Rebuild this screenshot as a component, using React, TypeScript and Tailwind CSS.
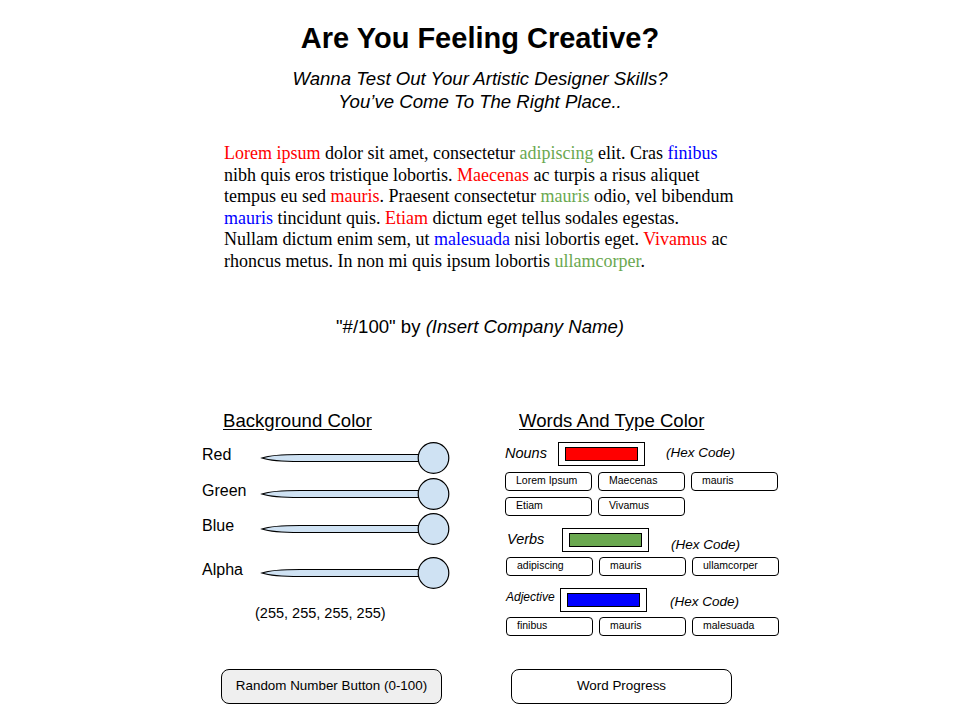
import React from "react";

const sans = "font-['Liberation_Sans',Arial,sans-serif]";

function Slider() {
  return (
    <svg width="192" height="34" viewBox="0 0 192 34" className="block">
      <path
        d="M2 17 C 10 14.2, 20 13.5, 40 13.5 L 162 13.5 L 162 20.5 L 40 20.5 C 20 20.5, 10 19.8, 2 17 Z"
        fill="#cfe2f3"
        stroke="#000"
        strokeWidth="1.2"
      />
      <circle cx="173.5" cy="17" r="15.3" fill="#cfe2f3" stroke="#000" strokeWidth="1.2" />
    </svg>
  );
}

function SliderRow({ label, mt }: { label: string; mt: string }) {
  return (
    <div className={`flex items-center ${mt}`}>
      <span className="w-[58px] pb-[6px] text-[16px]">{label}</span>
      <Slider />
    </div>
  );
}

function Swatch({ color }: { color: string }) {
  return (
    <div className="flex h-[24px] w-[87px] items-center justify-center border border-black">
      <div className="h-[14px] w-[73px] border border-black" style={{ background: color }} />
    </div>
  );
}

function Pill({ text }: { text: string }) {
  return (
    <div className="flex h-[19px] w-[87px] items-center rounded-[4px] border border-black pl-[10px] text-[10.5px]">
      {text}
    </div>
  );
}

function WordGroup({
  label,
  labelClass,
  color,
  hexClass,
  pillGap,
  words,
}: {
  label: string;
  labelClass: string;
  color: string;
  hexClass: string;
  pillGap: string;
  words: string[][];
}) {
  return (
    <div>
      <div className="flex h-[24px] items-start">
        <span className={`italic ${labelClass}`}>{label}</span>
        <Swatch color={color} />
        <span className={`italic text-[13.5px] ${hexClass}`}>(Hex Code)</span>
      </div>
      <div className={`flex flex-col gap-[6px] ${pillGap}`}>
        {words.map((row, i) => (
          <div key={i} className="flex gap-[6px]">
            {row.map((w) => (
              <Pill key={w} text={w} />
            ))}
          </div>
        ))}
      </div>
    </div>
  );
}

export default function App() {
  const red = "text-[#ff0000]";
  const green = "text-[#6aa84f]";
  const blue = "text-[#0000ff]";

  return (
    <div className={`h-[720px] w-[960px] overflow-hidden bg-white text-black ${sans}`}>
      <div className="pt-[21px] text-center">
        <h1 className="text-[29px] font-bold leading-[34px]">Are You Feeling Creative?</h1>
        <p className="mt-[12px] text-[18.6px] italic leading-[23px]">
          Wanna Test Out Your Artistic Designer Skills?
          <br />
          You’ve Come To The Right Place..
        </p>
      </div>

      <p className="mx-auto mt-[30px] w-[512px] font-['Liberation_Serif','Times_New_Roman',serif] text-[18px] leading-[21.6px]">
        <span className={red}>Lorem ipsum</span> dolor sit amet, consectetur{" "}
        <span className={green}>adipiscing</span> elit. Cras <span className={blue}>finibus</span>
        <br />
        nibh quis eros tristique lobortis. <span className={red}>Maecenas</span> ac turpis a risus aliquet
        <br />
        tempus eu sed <span className={red}>mauris</span>. Praesent consectetur{" "}
        <span className={green}>mauris</span> odio, vel bibendum
        <br />
        <span className={blue}>mauris</span> tincidunt quis. <span className={red}>Etiam</span> dictum eget
        tellus sodales egestas.
        <br />
        Nullam dictum enim sem, ut <span className={blue}>malesuada</span> nisi lobortis eget.{" "}
        <span className={red}>Vivamus</span> ac
        <br />
        rhoncus metus. In non mi quis ipsum lobortis <span className={green}>ullamcorper</span>.
      </p>

      <p className="mt-[41px] text-center text-[18.6px] leading-[26px]">
        "#/100" by <span className="italic">(Insert Company Name)</span>
      </p>

      <div className="mt-[70px] flex">
        <div className="ml-[202px] w-[300px]">
          <h2 className="ml-[21px] text-[18.6px] leading-[22px] underline underline-offset-[2px]">
            Background Color
          </h2>
          <div className="mt-[9px]">
            <SliderRow label="Red" mt="" />
            <SliderRow label="Green" mt="mt-[2px]" />
            <SliderRow label="Blue" mt="mt-[1px]" />
            <SliderRow label="Alpha" mt="mt-[10px]" />
          </div>
          <p className="mt-[13px] ml-[53px] text-[14.5px]">(255, 255, 255, 255)</p>
        </div>

        <div className="ml-[2px] w-[280px]">
          <h2 className="ml-[15px] text-[18.6px] leading-[22px] underline underline-offset-[2px]">
            Words And Type Color
          </h2>
          <div className="mt-[10px] ml-[1px]">
            <WordGroup
              label="Nouns"
              labelClass="w-[53px] pt-[1px] text-[14.5px]"
              color="#ff0000"
              hexClass="ml-[21px] pt-[1px]"
              pillGap="mt-[6px]"
              words={[
                ["Lorem Ipsum", "Maecenas", "mauris"],
                ["Etiam", "Vivamus"],
              ]}
            />
            <div className="mt-[12px] ml-[1px]">
              <WordGroup
                label="Verbs"
                labelClass="w-[55px] pt-[1px] text-[14.5px] ml-[1px]"
                color="#6aa84f"
                hexClass="ml-[22px] pt-[7px]"
                pillGap="mt-[5px]"
                words={[["adipiscing", "mauris", "ullamcorper"]]}
              />
            </div>
            <div className="mt-[12px] ml-[1px]">
              <WordGroup
                label="Adjective"
                labelClass="w-[54px] text-[12px]"
                color="#0000ff"
                hexClass="ml-[23px] pt-[4px]"
                pillGap="mt-[5px]"
                words={[["finibus", "mauris", "malesuada"]]}
              />
            </div>
          </div>
        </div>
      </div>

      <div className="mt-[33px] flex">
        <button className="ml-[221px] h-[35px] w-[221px] rounded-[8px] border border-black bg-[#efefef] text-[13.4px]">
          Random Number Button (0-100)
        </button>
        <button className="ml-[69px] h-[35px] w-[221px] rounded-[8px] border border-black bg-white text-[13.4px]">
          Word Progress
        </button>
      </div>
    </div>
  );
}
